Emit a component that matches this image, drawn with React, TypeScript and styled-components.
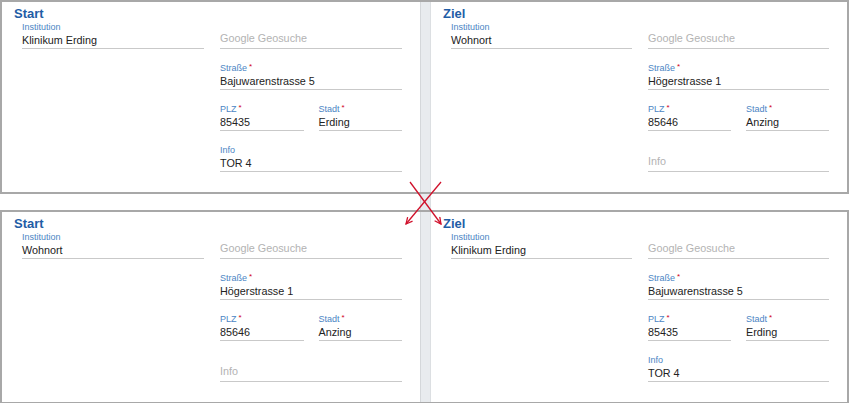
import React from 'react'
import styled, { createGlobalStyle } from 'styled-components'

const GlobalStyle = createGlobalStyle`
  html, body {
    margin: 0;
    padding: 0;
    background: #ffffff;
  }
  body {
    font-family: 'Liberation Sans', Arial, Helvetica, sans-serif;
    -webkit-font-smoothing: antialiased;
  }
`

type FieldData = {
  label?: string
  required?: boolean
  value?: string
  placeholder?: string
}

type Address = {
  institution: string
  street: string
  zip: string
  city: string
  info: string
}

const Page = styled.div`
  position: relative;
  width: 849px;
`

const Panel = styled.div`
  box-sizing: border-box;
  height: 194px;
  border: 2px solid #a8a8a8;
  background: #ffffff;
  display: grid;
  grid-template-columns: 418px 11px 1fr;
`

const GapRow = styled.div`
  height: 16px;
  padding-left: 420px;
`

const Strip = styled.div`
  box-sizing: border-box;
  width: 11px;
  height: 100%;
  background: #e8ebee;
  border-left: 1px solid #d4d7da;
  border-right: 1px solid #dcdfe2;
`

const Section = styled.div`
  display: flex;
  flex-direction: column;
`

const Heading = styled.div`
  padding: 4px 0 0 12px;
  font-size: 13px;
  line-height: 16px;
  font-weight: 700;
  color: #1f5da6;
`

const Fields = styled.div`
  display: grid;
  grid-template-columns: 1fr 1fr;
  column-gap: 16px;
  align-items: start;
  padding: 0 18px 0 20px;
`

const Stack = styled.div`
  display: flex;
  flex-direction: column;
  gap: 14px;
`

const Pair = styled.div`
  display: grid;
  grid-template-columns: 1fr 1fr;
  column-gap: 15px;
`

const FieldBox = styled.div`
  display: flex;
  flex-direction: column;
  border-bottom: 1px solid #c9c9c9;
`

const Label = styled.div`
  height: 11px;
  font-size: 9px;
  line-height: 11px;
  color: #4b85c4;
  white-space: nowrap;
`

const Required = styled.span`
  margin-left: 2px;
  font-size: 8px;
  line-height: 8px;
  vertical-align: top;
  color: #d0021b;
`

const Value = styled.div<{ $empty?: boolean }>`
  font-size: 10.8px;
  line-height: ${(p) => (p.$empty ? '10px' : '14px')};
  padding-bottom: ${(p) => (p.$empty ? '5px' : '1px')};
  color: ${(p) => (p.$empty ? '#b3b3b3' : '#222222')};
  white-space: nowrap;
`

const Arrows = styled.svg`
  position: absolute;
  left: 400px;
  top: 176px;
  width: 50px;
  height: 56px;
  overflow: visible;
  pointer-events: none;
`

const Field = ({ label, required, value, placeholder }: FieldData) => {
  const empty = !value
  return (
    <FieldBox>
      <Label>
        {!empty && label ? label : '\u00a0'}
        {!empty && label && required ? <Required>*</Required> : null}
      </Label>
      <Value $empty={empty}>{empty ? placeholder : value}</Value>
    </FieldBox>
  )
}

const AddressSection = ({ title, data }: { title: string; data: Address }) => (
  <Section>
    <Heading>{title}</Heading>
    <Fields>
      <Stack>
        <Field label="Institution" value={data.institution} placeholder="Institution" />
      </Stack>
      <Stack>
        <Field placeholder="Google Geosuche" />
        <Field label="Straße" required value={data.street} placeholder="Straße" />
        <Pair>
          <Field label="PLZ" required value={data.zip} placeholder="PLZ" />
          <Field label="Stadt" required value={data.city} placeholder="Stadt" />
        </Pair>
        <Field label="Info" value={data.info} placeholder="Info" />
      </Stack>
    </Fields>
  </Section>
)

const clinic: Address = {
  institution: 'Klinikum Erding',
  street: 'Bajuwarenstrasse 5',
  zip: '85435',
  city: 'Erding',
  info: 'TOR 4',
}

const home: Address = {
  institution: 'Wohnort',
  street: 'Högerstrasse 1',
  zip: '85646',
  city: 'Anzing',
  info: '',
}

const TripPanel = ({ start, goal }: { start: Address; goal: Address }) => (
  <Panel>
    <AddressSection title="Start" data={start} />
    <Strip />
    <AddressSection title="Ziel" data={goal} />
  </Panel>
)

const App = () => (
  <>
    <GlobalStyle />
    <Page>
      <TripPanel start={clinic} goal={home} />
      <GapRow>
        <Strip />
      </GapRow>
      <TripPanel start={home} goal={clinic} />
      {/* swap marker between the two panels */}
      <Arrows viewBox="400 176 50 56">
        <defs>
          <marker
            id="swap-head"
            viewBox="0 0 10 10"
            refX="9"
            refY="5"
            markerWidth="8"
            markerHeight="8"
            markerUnits="userSpaceOnUse"
            orient="auto"
          >
            <path d="M1 1 L9 5 L1 9" fill="none" stroke="#d0112b" strokeWidth="1.6" />
          </marker>
        </defs>
        <line x1="410" y1="182" x2="441" y2="224" stroke="#d0112b" strokeWidth="1.3" markerEnd="url(#swap-head)" />
        <line x1="441" y1="182" x2="406" y2="224" stroke="#d0112b" strokeWidth="1.3" markerEnd="url(#swap-head)" />
      </Arrows>
    </Page>
  </>
)

export default App
